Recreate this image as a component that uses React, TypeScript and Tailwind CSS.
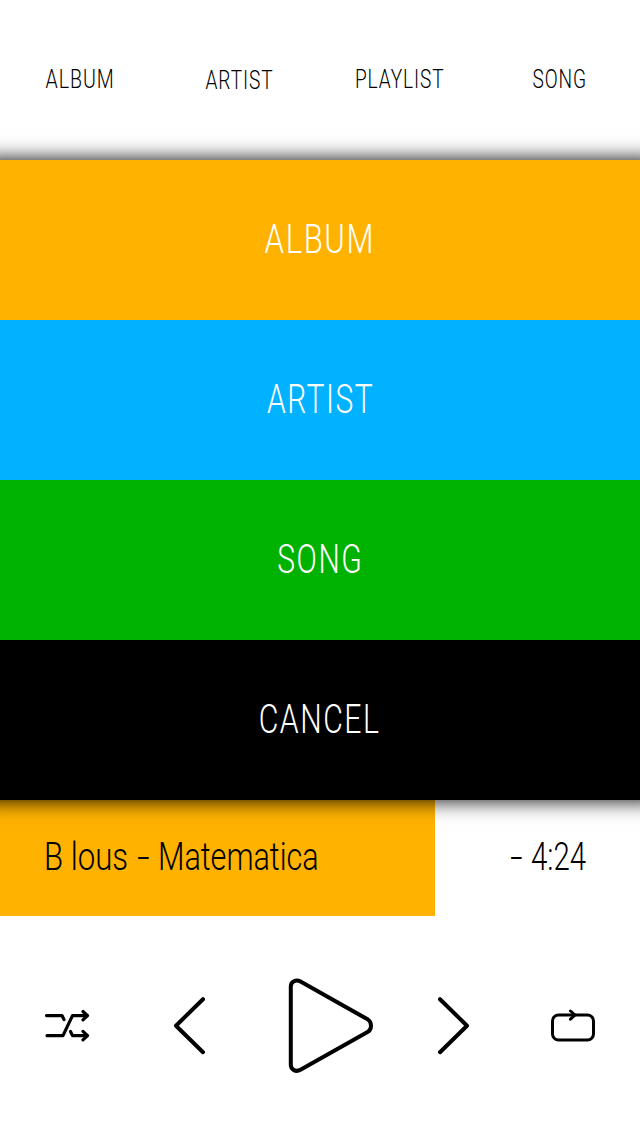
import React from 'react';

const TABS = [
  { label: 'ALBUM', box: 'ml-[46px] w-[68px] pb-0.5', text: 'scale-x-[0.783]' },
  { label: 'ARTIST', box: 'ml-[92px] w-[67px]', text: 'scale-x-[0.766]' },
  { label: 'PLAYLIST', box: 'ml-[82px] w-[89px] pb-0.5', text: 'scale-x-[0.763]' },
  { label: 'SONG', box: 'ml-[88px] w-[55px] pb-0.5', text: 'scale-x-[0.765]' },
];

const MENU_ITEMS = [
  { label: 'ALBUM', color: 'bg-[#ffb200]', text: 'scale-x-[0.78]' },
  { label: 'ARTIST', color: 'bg-[#00b2ff]', text: 'scale-x-[0.75]' },
  { label: 'SONG', color: 'bg-[#00b200]', text: 'scale-x-[0.75]' },
  { label: 'CANCEL', color: 'bg-black', text: 'scale-x-[0.755]' },
];

const TopTabs: React.FC = () => (
  <nav className="flex h-40 items-center">
    {TABS.map(tab => (
      <button key={tab.label} className={`flex shrink-0 justify-center ${tab.box}`}>
        <span className={`whitespace-nowrap text-[25px] font-light leading-none tracking-[1.2px] ${tab.text}`}>{tab.label}</span>
      </button>
    ))}
  </nav>
);

// wider than the screen so the shadow stays even up to both edges
const FilterMenu: React.FC = () => (
  <div className="relative z-10 -mx-5 flex flex-col shadow-[0_0_20px_rgba(0,0,0,1)]">
    {MENU_ITEMS.map(item => (
      <button key={item.label} className={`flex h-40 items-center justify-center text-white ${item.color}`}>
        <span className={`whitespace-nowrap text-[40px] font-light leading-none tracking-[2px] ${item.text}`}>{item.label}</span>
      </button>
    ))}
  </div>
);

const NowPlaying: React.FC = () => (
  <div className="flex h-[116px] text-[39px] font-light leading-none">
    <div className="flex w-[435px] items-center bg-[#ffb200] pb-0.5 pl-11">
      <div className="w-[93px] shrink-0">
        <span className="inline-block origin-left scale-x-[0.8] whitespace-nowrap">B lous</span>
      </div>
      <div className="w-[21px] shrink-0">
        <span className="inline-block origin-left scale-x-[1.15]">-</span>
      </div>
      <span className="origin-left scale-x-[0.783]">Matematica</span>
    </div>
    <div className="flex flex-1 items-center pb-0.5 pl-[75px]">
      <div className="w-[21px] shrink-0">
        <span className="inline-block origin-left scale-x-[1.15]">-</span>
      </div>
      <span className="origin-left scale-x-[0.755] whitespace-nowrap">4:24</span>
    </div>
  </div>
);

const Controls: React.FC = () => (
  <div className="flex h-[220px] items-center pl-11">
    <button aria-label="Shuffle">
      <svg className="block" width="47" height="40" viewBox="0 0 47 40" fill="none" stroke="black" strokeWidth="3.2" strokeLinecap="round" strokeLinejoin="round">
        <path d="M2.5 9.6H18L20 13.5" />
        <path d="M3 29.6H19L28.5 9.6H43" />
        <path d="M26.5 25.5L28.5 29.6H43" />
        <path d="M39 5.5L43.5 9.6L39 13.8M39 25.4L43.5 29.6L39 33.8" />
      </svg>
    </button>
    <button aria-label="Previous" className="ml-[81px]">
      <svg className="block" width="34" height="60" viewBox="0 0 34 60" fill="none" stroke="black" strokeWidth="4" strokeLinecap="round" strokeLinejoin="round">
        <path d="M31 3.2L4 29.7L31 56.2" />
      </svg>
    </button>
    <button aria-label="Play" className="ml-20">
      <svg className="block" width="90" height="100" viewBox="0 0 90 100" fill="none" stroke="black" strokeWidth="4" strokeLinejoin="round">
        <path d="M4.8 10.5C4.8 5.5 9.8 3 14.5 5.6L82 43.6C86 46 86 53.5 82 55.8L14.5 93.8C9.8 96.4 4.8 93.8 4.8 88.8Z" />
      </svg>
    </button>
    <button aria-label="Next" className="ml-[61px]">
      <svg className="block" width="34" height="60" viewBox="0 0 34 60" fill="none" stroke="black" strokeWidth="4" strokeLinecap="round" strokeLinejoin="round">
        <path d="M3 3.2L30 29.7L3 56.2" />
      </svg>
    </button>
    <button aria-label="Repeat" className="ml-[78px]">
      <svg className="block" width="48" height="40" viewBox="0 0 48 40" fill="none" stroke="black" strokeWidth="3" strokeLinecap="round" strokeLinejoin="round">
        <rect x="3.5" y="9" width="41" height="25" rx="6" />
        <path d="M21.5 5L26 9L21.5 13.2" />
      </svg>
    </button>
  </div>
);

const App: React.FC = () => {
  return (
    <main className="flex min-h-[1136px] w-[640px] flex-col overflow-hidden bg-white font-['Roboto',sans-serif] text-black">
      <TopTabs />
      <FilterMenu />
      <NowPlaying />
      <Controls />
    </main>
  );
};

export default App;
